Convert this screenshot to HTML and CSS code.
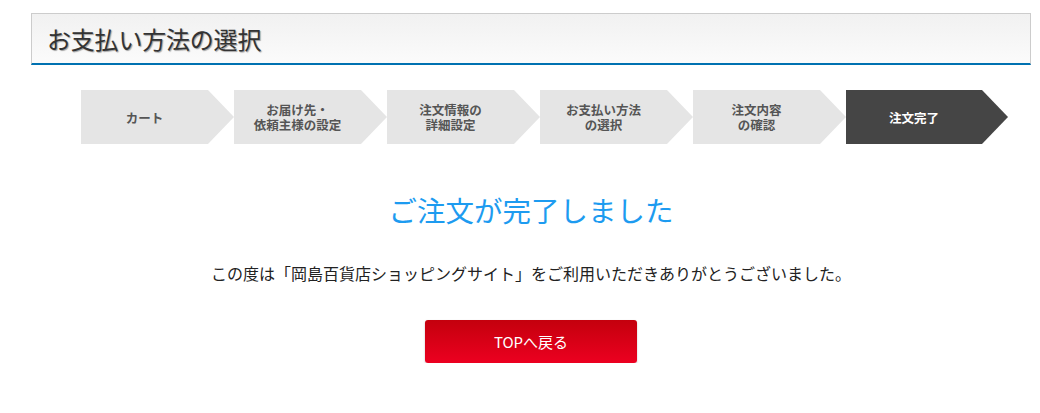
FILE: index.html
```html
<!DOCTYPE html>
<html lang="ja">
<head>
<meta charset="utf-8">
<title>お支払い方法の選択</title>
<link rel="stylesheet" href="styles.css">
</head>
<body>
<div class="page">
  <div class="page-header">
    <h1 class="page-title">お支払い方法の選択</h1>
  </div>
  <ol class="steps">
    <li class="step"><span>カート</span></li>
    <li class="step"><span>お届け先・<br>依頼主様の設定</span></li>
    <li class="step"><span>注文情報の<br>詳細設定</span></li>
    <li class="step"><span>お支払い方法<br>の選択</span></li>
    <li class="step"><span>注文内容<br>の確認</span></li>
    <li class="step step-current"><span>注文完了</span></li>
  </ol>
  <h2 class="done-title">ご注文が完了しました</h2>
  <p class="done-text">この度は「岡島百貨店ショッピングサイト」をご利用いただきありがとうございました。</p>
  <div class="actions">
    <a class="btn-top" href="#">TOPへ戻る</a>
  </div>
</div>
</body>
</html>
```

FILE: styles.css
```css
* { box-sizing: border-box; }
html, body { margin: 0; padding: 0; background: #fff; }
body {
  font-family: "Noto Sans CJK JP", "Noto Sans", sans-serif;
  color: #333;
}
.page {
  width: 1000px;
  margin: 13px 0 0 31px;
}
.page-header {
  height: 52px;
  border: 1px solid #cccccc;
  border-bottom: 2px solid #0071b1;
  background: linear-gradient(#f1f1f1, #fbfbfb);
  padding-left: 15px;
}
.page-title {
  margin: 0;
  font-size: 24px;
  font-weight: normal;
  line-height: 49px;
  color: #333;
  letter-spacing: -0.2px;
  text-shadow: 1px 1px 1px rgba(0, 0, 0, 0.35);
}
.steps {
  list-style: none;
  margin: 25px 0 0 50px;
  padding: 0;
  display: flex;
}
.step {
  width: 153px;
  height: 54px;
  padding-right: 26px;
  background: #e5e5e5;
  clip-path: polygon(0 0, 127px 0, 153px 50%, 127px 100%, 0 100%);
  display: flex;
  align-items: center;
  justify-content: center;
  text-align: center;
  font-size: 12.5px;
  font-weight: bold;
  line-height: 15px;
  color: #555;
}
.step-current {
  width: 162px;
  background: #454545;
  color: #fff;
  clip-path: polygon(0 0, 136px 0, 162px 50%, 136px 100%, 0 100%);
}
.done-title {
  margin: 46px 0 0;
  text-align: center;
  font-size: 28.5px;
  font-weight: normal;
  line-height: 40px;
  color: #1d9bf0;
}
.done-text {
  margin: 31px 0 0;
  text-align: center;
  font-size: 16px;
  line-height: 24px;
  color: #222;
}
.actions {
  margin-top: 35px;
  display: flex;
  justify-content: center;
}
.btn-top {
  width: 212px;
  height: 43px;
  display: flex;
  align-items: center;
  justify-content: center;
  border-radius: 3px;
  background: linear-gradient(#c4000d, #ec0020);
  box-shadow: 0 1px 2px rgba(0, 0, 0, 0.25);
  color: #fff;
  font-size: 15px;
  text-decoration: none;
}
```
